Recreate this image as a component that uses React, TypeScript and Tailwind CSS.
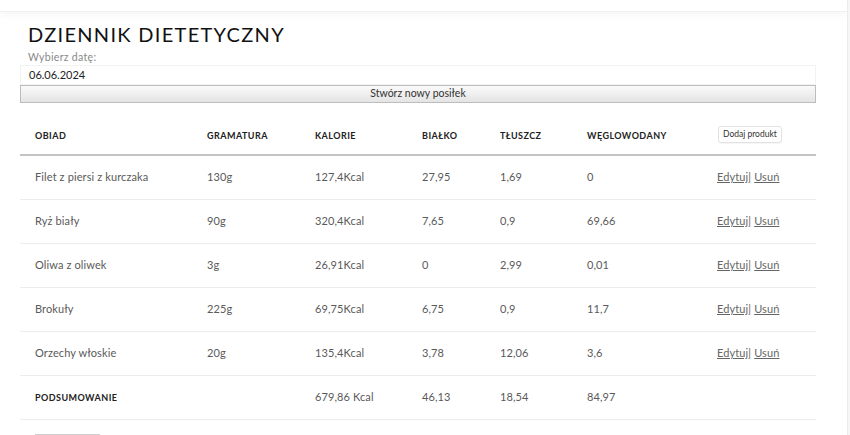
const font = { fontFamily: '"Lato", "Open Sans", sans-serif' }

type Item = {
  name: string
  weight: string
  kcal: string
  protein: string
  fat: string
  carbs: string
}

const items: Item[] = [
  { name: 'Filet z piersi z kurczaka', weight: '130g', kcal: '127,4Kcal', protein: '27,95', fat: '1,69', carbs: '0' },
  { name: 'Ryż biały', weight: '90g', kcal: '320,4Kcal', protein: '7,65', fat: '0,9', carbs: '69,66' },
  { name: 'Oliwa z oliwek', weight: '3g', kcal: '26,91Kcal', protein: '0', fat: '2,99', carbs: '0,01' },
  { name: 'Brokuły', weight: '225g', kcal: '69,75Kcal', protein: '6,75', fat: '0,9', carbs: '11,7' },
  { name: 'Orzechy włoskie', weight: '20g', kcal: '135,4Kcal', protein: '3,78', fat: '12,06', carbs: '3,6' },
]

const cols = 'grid grid-cols-[172px_108px_107px_78px_87px_130px_114px]'

function HeadCell({ children }: { children: React.ReactNode }) {
  return (
    <div className="pl-[15px] text-[9px] font-bold uppercase tracking-[0.05em] text-[#222]">{children}</div>
  )
}

function Cell({ children }: { children?: React.ReactNode }) {
  return <div className="pl-[15px] text-[11px] tracking-[0.01em] text-[#5a5a5a]">{children}</div>
}

export default function App() {
  return (
    <div className="flex h-[435px] w-[850px] overflow-hidden bg-white" style={font}>
      <div className="flex w-[847px] flex-col">
        <div className="h-[12px] shrink-0 border-b border-[#f0f0f0] bg-white shadow-[0_3px_8px_rgba(0,0,0,0.04)]" />

        <div className="px-[20px]">
          <h1 className="mt-[10px] pl-[8px] text-[20px] leading-[24px] font-normal tracking-[0.065em] text-[#111]">
            DZIENNIK DIETETYCZNY
          </h1>
          <div className="mt-[5px] pl-[8px] text-[10.5px] leading-[13px] tracking-[0.03em] text-[#888]">
            Wybierz datę:
          </div>
          <div className="mt-[1px] flex h-[20px] w-[796px] items-center border border-[#f2f2f2] pl-[8px] text-[11px] text-[#222]">
            06.06.2024
          </div>
          <button className="flex h-[18px] w-[796px] items-center justify-center border border-[#bdbdbd] bg-gradient-to-b from-[#fafafa] to-[#e4e4e4] text-[10.5px] text-[#333]">
            Stwórz nowy posiłek
          </button>

          <div className="mt-[9px] w-[796px]">
            <div className={`${cols} h-[44px] items-center border-b-2 border-[#c4c4c4] pt-[5px]`}>
              <HeadCell>Obiad</HeadCell>
              <HeadCell>Gramatura</HeadCell>
              <HeadCell>Kalorie</HeadCell>
              <HeadCell>Białko</HeadCell>
              <HeadCell>Tłuszcz</HeadCell>
              <HeadCell>Węglowodany</HeadCell>
              <div className="-mt-[9px] pl-[16px]">
                <button className="rounded-[3px] border border-[#e2e2e2] bg-white px-[4px] py-[1px] text-[8.5px] text-[#333] shadow-[0_1px_1px_rgba(0,0,0,0.04)]">
                  Dodaj produkt
                </button>
              </div>
            </div>

            {items.map((item) => (
              <div key={item.name} className={`${cols} h-[44px] items-center border-b border-[#ececec]`}>
                <Cell>{item.name}</Cell>
                <Cell>{item.weight}</Cell>
                <Cell>{item.kcal}</Cell>
                <Cell>{item.protein}</Cell>
                <Cell>{item.fat}</Cell>
                <Cell>{item.carbs}</Cell>
                <div className="pl-[15px] text-[11px] tracking-[0.01em] text-[#666]">
                  <a className="underline">Edytuj</a>| <a className="underline">Usuń</a>
                </div>
              </div>
            ))}

            <div className={`${cols} h-[44px] items-center border-b border-[#ececec]`}>
              <HeadCell>Podsumowanie</HeadCell>
              <Cell />
              <Cell>679,86 Kcal</Cell>
              <Cell>46,13</Cell>
              <Cell>18,54</Cell>
              <Cell>84,97</Cell>
              <Cell />
            </div>
          </div>

          <div className="mt-[14px] ml-[15px] h-[20px] w-[65px] border-t border-[#cfcfcf]" />
        </div>
      </div>
      <div className="w-[3px] border-l border-[#ececec] bg-[#f6f6f6]" />
    </div>
  )
}
